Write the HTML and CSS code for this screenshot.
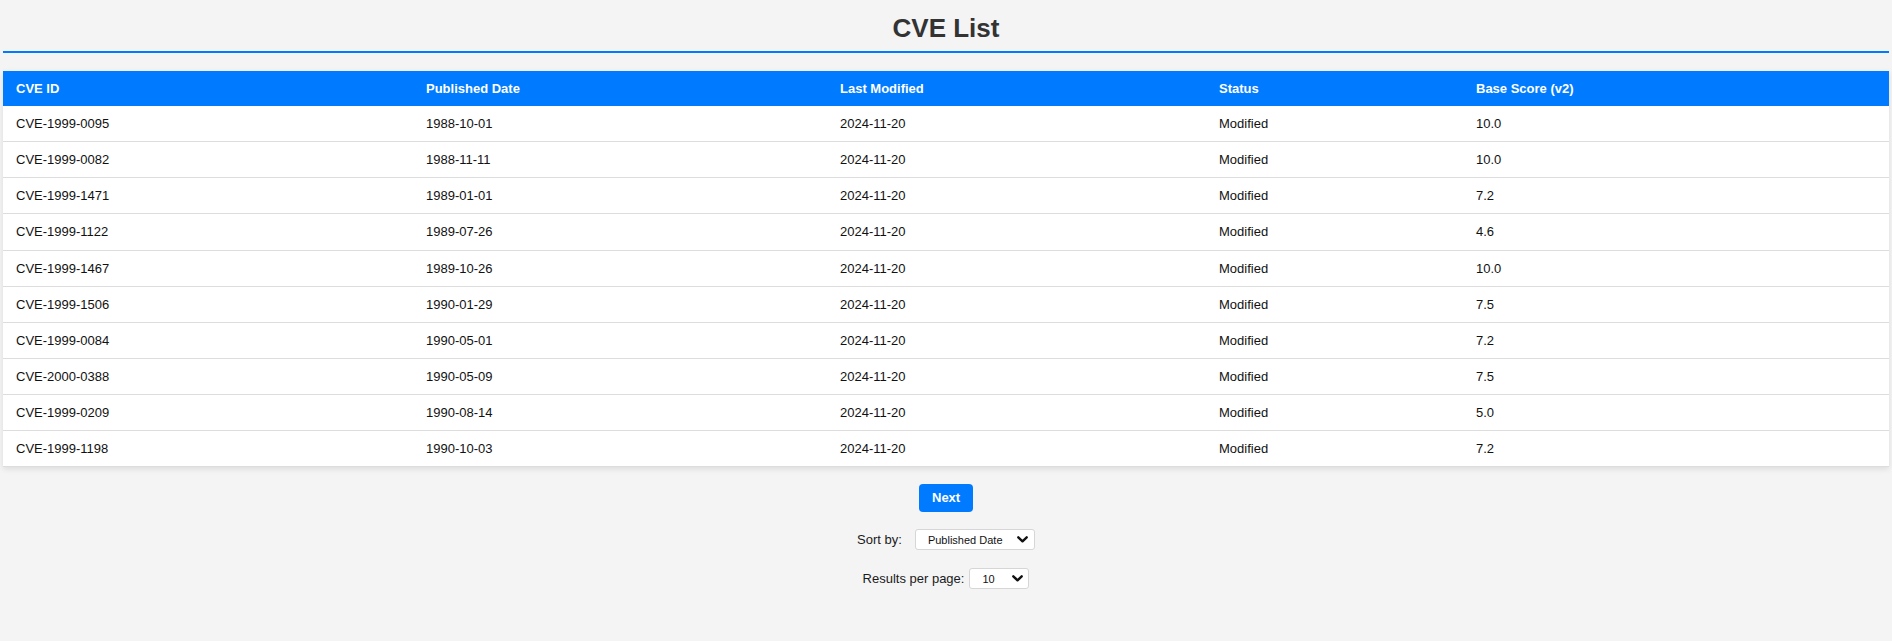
FILE: index.html
```html
<!DOCTYPE html>
<html lang="en">
<head>
<meta charset="utf-8">
<title>CVE List</title>
<link rel="stylesheet" href="styles.css">
</head>
<body>
<header class="page-header">
  <h1 class="title">CVE List</h1>
</header>
<main class="content">
  <table class="cve-table">
    <colgroup>
      <col class="c-id"><col class="c-pub"><col class="c-mod"><col class="c-status"><col class="c-score">
    </colgroup>
    <thead>
      <tr><th>CVE ID</th><th>Published Date</th><th>Last Modified</th><th>Status</th><th>Base Score (v2)</th></tr>
    </thead>
    <tbody>
      <tr><td>CVE-1999-0095</td><td>1988-10-01</td><td>2024-11-20</td><td>Modified</td><td>10.0</td></tr>
      <tr><td>CVE-1999-0082</td><td>1988-11-11</td><td>2024-11-20</td><td>Modified</td><td>10.0</td></tr>
      <tr><td>CVE-1999-1471</td><td>1989-01-01</td><td>2024-11-20</td><td>Modified</td><td>7.2</td></tr>
      <tr><td>CVE-1999-1122</td><td>1989-07-26</td><td>2024-11-20</td><td>Modified</td><td>4.6</td></tr>
      <tr><td>CVE-1999-1467</td><td>1989-10-26</td><td>2024-11-20</td><td>Modified</td><td>10.0</td></tr>
      <tr><td>CVE-1999-1506</td><td>1990-01-29</td><td>2024-11-20</td><td>Modified</td><td>7.5</td></tr>
      <tr><td>CVE-1999-0084</td><td>1990-05-01</td><td>2024-11-20</td><td>Modified</td><td>7.2</td></tr>
      <tr><td>CVE-2000-0388</td><td>1990-05-09</td><td>2024-11-20</td><td>Modified</td><td>7.5</td></tr>
      <tr><td>CVE-1999-0209</td><td>1990-08-14</td><td>2024-11-20</td><td>Modified</td><td>5.0</td></tr>
      <tr><td>CVE-1999-1198</td><td>1990-10-03</td><td>2024-11-20</td><td>Modified</td><td>7.2</td></tr>
    </tbody>
  </table>

  <div class="pager">
    <button class="next-btn" type="button">Next</button>
  </div>

  <div class="control-row sort-row">
    <label class="control-label" for="sort">Sort by:</label>
    <span class="select-wrap sort-wrap">
      <select id="sort" class="select sort-select">
        <option>Published Date</option>
        <option>Last Modified</option>
        <option>Base Score</option>
      </select>
      <svg class="chevron" width="11" height="7" viewBox="0 0 11 7" aria-hidden="true"><path d="M1.3 1.3 L5.5 5.3 L9.7 1.3" fill="none" stroke="#111" stroke-width="2.4" stroke-linecap="round" stroke-linejoin="round"/></svg>
    </span>
  </div>

  <div class="control-row per-page-row">
    <label class="control-label" for="per-page">Results per page:</label>
    <span class="select-wrap per-wrap">
      <select id="per-page" class="select per-select">
        <option>10</option>
        <option>20</option>
        <option>50</option>
      </select>
      <svg class="chevron" width="11" height="7" viewBox="0 0 11 7" aria-hidden="true"><path d="M1.3 1.3 L5.5 5.3 L9.7 1.3" fill="none" stroke="#111" stroke-width="2.4" stroke-linecap="round" stroke-linejoin="round"/></svg>
    </span>
  </div>
</main>
</body>
</html>
```

FILE: styles.css
```css
* {
  box-sizing: border-box;
}

html, body {
  margin: 0;
  padding: 0;
}

body {
  background: #f4f4f4;
  font-family: "Liberation Sans", Arial, sans-serif;
  font-size: 13px;
  color: #111;
  padding: 0 3px;
}

.page-header {
  padding: 13px 0 8px;
  border-bottom: 2px solid #007bff;
}

.title {
  margin: 0;
  font-size: 26px;
  line-height: 30px;
  font-weight: bold;
  color: #333;
  text-align: center;
}

.content {
  padding-top: 18px;
}

.cve-table {
  width: 100%;
  border-collapse: collapse;
  table-layout: fixed;
  background: #fff;
  box-shadow: 0 2px 6px rgba(0, 0, 0, 0.1);
}

.c-id { width: 410px; }
.c-pub { width: 414px; }
.c-mod { width: 379px; }
.c-status { width: 257px; }
.c-score { width: auto; }

.cve-table th,
.cve-table td {
  text-align: left;
  padding: 10px 13px;
  line-height: 15px;
  font-size: 13px;
  white-space: nowrap;
}

.cve-table th {
  background: #007bff;
  color: #fff;
  font-weight: bold;
}

.cve-table td {
  line-height: 15.14px;
  border-bottom: 1px solid #dddddd;
  color: #111;
}

.pager {
  display: flex;
  justify-content: center;
  margin-top: 17px;
}

.next-btn {
  background: #007bff;
  color: #fff;
  border: none;
  border-radius: 4px;
  font-family: "Liberation Sans", Arial, sans-serif;
  font-size: 13px;
  font-weight: bold;
  line-height: 16px;
  padding: 6px 13px;
  height: 28px;
  width: 54px;
  cursor: pointer;
}

.control-row {
  display: flex;
  justify-content: center;
  align-items: center;
  height: 21px;
}

.sort-row {
  margin-top: 17px;
}

.per-page-row {
  margin-top: 18px;
}

.control-label {
  font-size: 13px;
  color: #1a1a1a;
  line-height: 15px;
}

.select-wrap {
  position: relative;
  display: inline-flex;
}

.sort-wrap {
  margin-left: 13px;
}

.per-wrap {
  margin-left: 5px;
}

.select {
  appearance: none;
  -webkit-appearance: none;
  background: #fff;
  border: 1px solid #d6d6d6;
  border-radius: 3px;
  height: 21px;
  font-family: "Liberation Sans", Arial, sans-serif;
  font-size: 11px;
  color: #111;
  padding: 0 0 0 12px;
  margin: 0;
  outline: none;
}

.sort-select {
  width: 120px;
}

.per-select {
  width: 60px;
}

.chevron {
  position: absolute;
  right: 7px;
  top: 7px;
  pointer-events: none;
}

.per-wrap .chevron {
  right: 6px;
}
```
